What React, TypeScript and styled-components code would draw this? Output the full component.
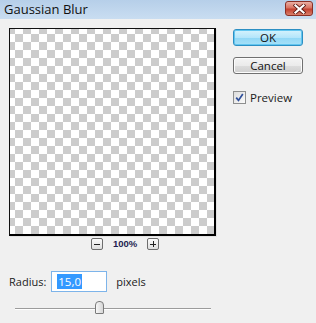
import React from "react";
import styled, { createGlobalStyle } from "styled-components";

const Global = createGlobalStyle`
  html, body { margin: 0; padding: 0; background: #f0f0f0; }
  body { font-family: "Open Sans", "Liberation Sans", Arial, sans-serif; }
`;

const Window = styled.div`
  width: 316px;
  height: 323px;
  background: #f0f0f0;
  display: flex;
  flex-direction: column;
  overflow: hidden;
  font-family: "Open Sans", "Liberation Sans", Arial, sans-serif;
  font-size: 11px;
  color: #1b1b1b;
`;

const TitleBar = styled.div`
  height: 19px;
  flex: none;
  display: flex;
  align-items: flex-start;
  justify-content: space-between;
  padding: 0 3px 0 4px;
  background: linear-gradient(#b6cfe9, #c9ddf1);
`;

const Title = styled.span`
  font-family: "Open Sans", "Liberation Sans", sans-serif;
  font-size: 13px;
  line-height: 19px;
  color: #101010;
`;

const CloseButton = styled.div`
  margin-top: 1px;
  width: 28px;
  height: 15px;
  box-sizing: border-box;
  border: 1px solid #8a3026;
  border-radius: 3px;
  background: linear-gradient(#eab0a4 0%, #d87261 45%, #c2402f 55%, #d9806b 100%);
  display: flex;
  align-items: center;
  justify-content: center;
`;

const Body = styled.div`
  display: flex;
  flex-direction: column;
  padding: 9px 0 0 9px;
`;

const TopSection = styled.div`
  display: flex;
  gap: 17px;
`;

const PreviewColumn = styled.div`
  width: 207px;
  display: flex;
  flex-direction: column;
`;

const PreviewFrame = styled.div`
  width: 207px;
  height: 208px;
  box-sizing: border-box;
  border-style: solid;
  border-color: #111 #000 #000 #111;
  border-width: 1px 2px 2px 1px;
  background: conic-gradient(#fff 0 25%, #cccccc 0 50%, #fff 0 75%, #cccccc 0) -3px -3px / 16px 16px;
  box-shadow: 1px 1px 0 #e2e2e2;
`;

const ZoomRow = styled.div`
  display: flex;
  align-items: center;
  margin-top: 2px;
  padding-left: 82px;
  height: 12px;
`;

const ZoomButton = styled.div`
  width: 12px;
  height: 12px;
  box-sizing: border-box;
  border: 1px solid #6d6d6d;
  border-radius: 2px;
  background: linear-gradient(#fbfbfb, #dedede);
  display: flex;
  align-items: center;
  justify-content: center;
`;

const ZoomLabel = styled.span`
  font-family: "Liberation Sans", Arial, sans-serif;
  font-size: 9.5px;
  font-weight: bold;
  color: #1d1d50;
  margin: 0 10px;
  line-height: 12px;
`;

const SideColumn = styled.div`
  display: flex;
  flex-direction: column;
  padding-top: 1px;
`;

const DialogButton = styled.div<{ $primary?: boolean }>`
  width: 70px;
  height: 17px;
  box-sizing: border-box;
  border: 1px solid ${(p) => (p.$primary ? "#2c8fc3" : "#707070")};
  border-radius: 3px;
  background: ${(p) =>
    p.$primary
      ? "linear-gradient(#d6f3fd 0%, #b4e6fb 50%, #8fd7f6 51%, #a7e1f8 100%)"
      : "linear-gradient(#f4f4f4 0%, #ebebeb 50%, #dddddd 51%, #cfcfcf 100%)"};
  box-shadow: ${(p) => (p.$primary ? "inset 0 0 0 1px #62c6f0" : "inset 0 0 0 1px #fcfcfc")};
  display: flex;
  align-items: center;
  justify-content: center;
  font-size: 11.5px;
  color: #111;
  margin-bottom: 11px;
`;

const CheckRow = styled.label`
  display: flex;
  align-items: center;
  gap: 4px;
  margin-top: 6px;
  height: 13px;
`;

const CheckBox = styled.div`
  width: 13px;
  height: 13px;
  box-sizing: border-box;
  border: 1px solid #8e8f8f;
  background: linear-gradient(135deg, #dcdcdc, #fbfbfb);
  display: flex;
  align-items: center;
  justify-content: center;
`;

const RadiusRow = styled.div`
  display: flex;
  align-items: center;
  margin-top: 21px;
  height: 21px;
`;

const Label = styled.span<{ $size?: number }>`
  font-size: ${(p) => p.$size ?? 11.5}px;
`;

const RadiusInput = styled.div`
  width: 56px;
  height: 21px;
  box-sizing: border-box;
  margin: 0 9px 0 5px;
  border: 1px solid #7db4ea;
  background: #fff;
  display: flex;
  align-items: center;
  padding-left: 5px;
`;

const Selected = styled.span`
  background: #3399ff;
  color: #fff;
  font-size: 11.5px;
  line-height: 15px;
  padding: 0 1px;
`;

const SliderRow = styled.div`
  position: relative;
  margin: 9px 0 0 6px;
  width: 196px;
  height: 14px;
  display: flex;
  align-items: center;
`;

const Track = styled.div`
  width: 100%;
  height: 1px;
  background: #9c9c9c;
  box-shadow: 0 1px 0 #ffffff;
`;

const Thumb = styled.div`
  position: absolute;
  top: 0;
  width: 9px;
  height: 13px;
  box-sizing: border-box;
  border: 1px solid #7a7a7a;
  border-radius: 4px 4px 1px 1px;
  background: linear-gradient(90deg, #f7f7f7, #d6d6d6);
`;

export default function App() {
  const value = 15;
  const max = 35;
  const thumbLeft = Math.round((value / max) * 196) - 4;
  return (
    <Window>
      <Global />
      <TitleBar>
        <Title>Gaussian Blur</Title>
        <CloseButton>
          <svg width="13" height="10" viewBox="0 0 13 10">
            <path d="M2.5 1.5 L10.5 8.5 M10.5 1.5 L2.5 8.5" stroke="#5a1a14" strokeWidth="3.8" strokeLinecap="square" />
            <path d="M2.5 1.5 L10.5 8.5 M10.5 1.5 L2.5 8.5" stroke="#ffffff" strokeWidth="2.2" strokeLinecap="square" />
          </svg>
        </CloseButton>
      </TitleBar>
      <Body>
        <TopSection>
          <PreviewColumn>
            <PreviewFrame />
            <ZoomRow>
              <ZoomButton>
                <svg width="6" height="6" viewBox="0 0 6 6">
                  <path d="M0 3.5 H6" stroke="#222" strokeWidth="1" />
                </svg>
              </ZoomButton>
              <ZoomLabel>100%</ZoomLabel>
              <ZoomButton>
                <svg width="6" height="6" viewBox="0 0 6 6">
                  <path d="M0 3.5 H6 M3.5 0 V6" stroke="#222" strokeWidth="1" />
                </svg>
              </ZoomButton>
            </ZoomRow>
          </PreviewColumn>
          <SideColumn>
            <DialogButton $primary>OK</DialogButton>
            <DialogButton>Cancel</DialogButton>
            <CheckRow>
              <CheckBox>
                <svg width="9" height="9" viewBox="0 0 9 9">
                  <path d="M1.2 4.6 L3.5 7.4 L7.8 1" fill="none" stroke="#2f4f9a" strokeWidth="1.7" />
                </svg>
              </CheckBox>
              <Label>Preview</Label>
            </CheckRow>
          </SideColumn>
        </TopSection>
        <RadiusRow>
          <Label $size={11}>Radius:</Label>
          <RadiusInput>
            <Selected>15,0</Selected>
          </RadiusInput>
          <Label $size={11}>pixels</Label>
        </RadiusRow>
        <SliderRow>
          <Track />
          <Thumb style={{ left: thumbLeft }} />
        </SliderRow>
      </Body>
    </Window>
  );
}
